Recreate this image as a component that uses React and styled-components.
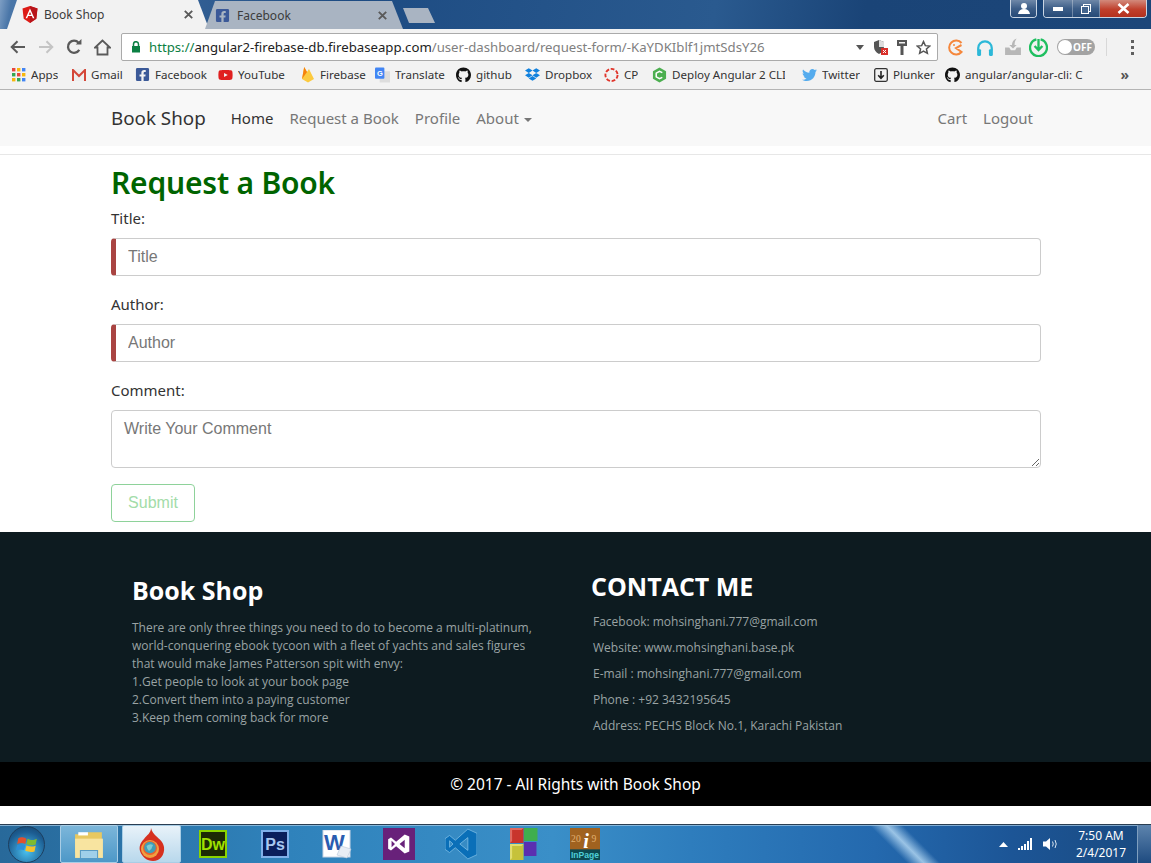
import React from "react"
import styled, { createGlobalStyle } from "styled-components"
import { FaGithub, FaTwitter, FaDropbox, FaFacebookSquare, FaYoutube } from "react-icons/fa"

const GlobalStyle = createGlobalStyle`
  html, body { margin: 0; padding: 0; background: #fff; }
  * { box-sizing: border-box; }
`

const Page = styled.div`
  width: 1151px;
  height: 863px;
  overflow: hidden;
  display: flex;
  flex-direction: column;
  font-family: "Noto Sans", sans-serif;
`

/* ---------- browser chrome ---------- */
const TitleBar = styled.div`
  height: 29px;
  flex: none;
  display: flex;
  align-items: flex-end;
  justify-content: space-between;
  padding-left: 7px;
  background: linear-gradient(100deg, #7d9ec4 0, #4a76a8 1%, #1d4b82 30%, #2a5a8f 62%, #1a4477 75%, #1c4679 100%);
`
const Tabs = styled.div`
  display: flex;
  align-items: flex-end;
`
const Tab = styled.div`
  width: ${p => p.$active ? "202px" : "198px"};
  height: ${p => p.$active ? "29px" : "28px"};
  margin-left: ${p => p.$active ? "0" : "-4px"};
  padding: 0 16px 0 ${p => p.$active ? "15px" : "10px"};
  display: flex;
  align-items: center;
  gap: 6px;
  font-size: 12px;
  color: #3c3c3c;
  background: ${p => p.$active ? "#f2f2f2" : "#a9b4c2"};
  clip-path: polygon(0 100%, 10px 0, calc(100% - 11px) 0, 100% 100%);
`
const TabIcon = styled.span`
  display: flex;
  width: 16px;
`
const TabLabel = styled.span`
  flex: 1;
`
const NewTab = styled.div`
  width: 32px;
  height: 15px;
  margin-bottom: 6px;
  background: #a9b4c2;
  clip-path: polygon(0 0, 25px 0, 100% 100%, 6px 100%);
`
const WindowButtons = styled.div`
  display: flex;
  align-self: flex-start;
  gap: 6px;
  margin-right: 4px;
`
const WinGroup = styled.div`
  height: 18px;
  display: flex;
  border: 1px solid #c9d5e3;
  border-top: none;
  border-radius: 0 0 4px 4px;
  overflow: hidden;
`
const WinBtn = styled.div`
  width: ${p => p.$w}px;
  display: flex;
  align-items: center;
  justify-content: center;
  background: ${p => p.$close
    ? "linear-gradient(#d28a7c, #c0402c 55%, #b4311e)"
    : "linear-gradient(#6f88a8, #3d5e88 50%, #264a77)"};
  border-right: 1px solid rgba(255,255,255,.3);
  &:last-child { border-right: none; }
`

const Toolbar = styled.div`
  height: 33px;
  flex: none;
  display: flex;
  align-items: center;
  background: #f2f2f2;
  padding: 3px 0 0 10px;
`
const NavIcons = styled.div`
  width: 111px;
  display: flex;
  align-items: center;
  gap: 12px;
`
const Omnibox = styled.div`
  width: 817px;
  height: 28px;
  display: flex;
  align-items: center;
  background: #fff;
  border: 1px solid #aaa;
  border-radius: 2px;
  padding: 0 6px 0 9px;
  font-size: 13.2px;
  white-space: nowrap;
`
const Https = styled.span`
  color: #0b8043;
  margin-left: 8px;
`
const Host = styled.span`
  color: #222;
`
const UrlPath = styled.span`
  color: #808080;
  flex: 1;
`
const OmniIcons = styled.div`
  display: flex;
  align-items: center;
  gap: 9px;
`
const Extensions = styled.div`
  display: flex;
  align-items: center;
  margin-left: 2px;
`
const ExtSlot = styled.div`
  width: ${p => p.$w}px;
  display: flex;
  justify-content: center;
`
const OffPill = styled.div`
  width: 38px;
  height: 16px;
  margin-left: 7px;
  border-radius: 8px;
  background: #a3a3a3;
  color: #fff;
  font-size: 10px;
  font-weight: 700;
  display: flex;
  align-items: center;
  justify-content: flex-end;
  padding-right: 3px;
  position: relative;
  &::before {
    content: "";
    position: absolute;
    left: 1px;
    top: 1px;
    width: 14px;
    height: 14px;
    border-radius: 50%;
    background: #fff;
  }
`
const Separator = styled.div`
  width: 1px;
  height: 18px;
  margin-left: 11px;
  background: #d8d8d8;
`
const Menu = styled.div`
  margin-left: 24px;
  display: flex;
  flex-direction: column;
  gap: 3px;
`
const MenuDot = styled.i`
  width: 3px;
  height: 3px;
  background: #5f5f5f;
  display: block;
`

const Bookmarks = styled.div`
  height: 28px;
  flex: none;
  display: flex;
  align-items: center;
  background: #f2f2f2;
  border-bottom: 1px solid #b4b4b4;
  padding: 0 22px 2px 11px;
  font-size: 11.6px;
  color: #333;
  white-space: nowrap;
`
const Mark = styled.div`
  display: flex;
  align-items: center;
  gap: 5px;
  width: ${p => p.$w}px;
  flex: none;
`
const MarkIcon = styled.span`
  width: 15px;
  flex: none;
  display: flex;
  justify-content: center;
`
const MarkLabel = styled.span`
  overflow: hidden;
  max-width: ${p => p.$max ? `${p.$max}px` : "none"};
`
const Chevron = styled.span`
  margin-left: auto;
  color: #555;
  font-size: 14px;
  font-weight: 700;
`

/* ---------- site ---------- */
const Navbar = styled.nav`
  height: 56px;
  flex: none;
  background: #f8f8f8;
  display: flex;
  align-items: center;
  padding: 0 118px 0 111px;
  font-size: 15px;
`
const Brand = styled.span`
  font-size: 18.8px;
  color: #333;
  margin-right: 25px;
`
const NavLink = styled.span`
  color: ${p => p.$active ? "#333" : "#777"};
  margin-right: 16px;
  &:last-child { margin-right: 0; }
`
const Caret = styled.i`
  display: inline-block;
  margin-left: 5px;
  vertical-align: middle;
  border-top: 4px solid #777;
  border-left: 4px solid transparent;
  border-right: 4px solid transparent;
`
const NavRight = styled.div`
  margin-left: auto;
  display: flex;
`
const Main = styled.main`
  flex: none;
  height: 378px;
  margin-top: 8px;
  border-top: 1px solid #e7e7e7;
  padding: 6px 110px 0 111px;
`
const Heading = styled.h1`
  margin: 0 0 3px;
  font-size: 30px;
  line-height: 44px;
  font-weight: 600;
  letter-spacing: -0.2px;
  color: #006400;
`
const Label = styled.label`
  display: block;
  font-size: 15px;
  line-height: 20px;
  color: #333;
  margin-bottom: 10px;
`
const Field = styled.div`
  margin-bottom: 18px;
`
const Input = styled.input`
  display: block;
  width: 100%;
  height: 38px;
  padding: 0 12px;
  font: 16px "Liberation Sans", sans-serif;
  color: #555;
  background: #fff;
  border: 1px solid #ccc;
  border-left: 5px solid #a94442;
  border-radius: 4px;
  &::placeholder { color: #777; opacity: 1; }
`
const TextArea = styled.textarea`
  display: block;
  width: 100%;
  height: 58px;
  padding: 9px 12px;
  font: 16px "Liberation Sans", sans-serif;
  border: 1px solid #ccc;
  border-radius: 4px;
  &::placeholder { color: #777; opacity: 1; }
`
const Submit = styled.button`
  display: block;
  width: 84px;
  height: 38px;
  margin-top: -2px;
  font: 16px "Liberation Sans", sans-serif;
  color: #a3dca9;
  background: #fff;
  border: 1px solid #8ed29a;
  border-radius: 4px;
`

const Footer = styled.footer`
  height: 230px;
  flex: none;
  background: #0d1b20;
  display: flex;
  font-family: "Open Sans", sans-serif;
`
const FooterLeft = styled.div`
  width: 459px;
  margin-left: 132px;
  padding-top: 41px;
`
const FooterTitle = styled.h2`
  margin: 0 0 12px;
  font-size: 25px;
  line-height: 34px;
  font-weight: 700;
  color: #fff;
`
const FooterText = styled.p`
  margin: 0;
  font-size: 12px;
  line-height: 18px;
  color: #9aa3a4;
`
const FooterRight = styled.div`
  padding-top: 37px;
`
const ContactTitle = styled.h2`
  margin: 0 0 6px;
  font-size: 25px;
  line-height: 34px;
  font-weight: 700;
  color: #fff;
`
const ContactLine = styled.p`
  margin: 0 0 0 2px;
  font-size: 12px;
  line-height: 26px;
  color: #9aa3a4;
`
const Copyright = styled.div`
  height: 44px;
  flex: none;
  background: #000;
  color: #fff;
  font-size: 15.5px;
  display: flex;
  align-items: center;
  justify-content: center;
`
const Spacer = styled.div`
  height: 18px;
  flex: none;
  background: #fff;
`

/* ---------- taskbar ---------- */
const Taskbar = styled.div`
  height: 39px;
  flex: none;
  display: flex;
  align-items: center;
  background:
    linear-gradient(45deg, transparent 76.3%, rgba(175, 212, 240, .85) 77.7%, transparent 79.1%),
    linear-gradient(90deg, #28699a 0, #2f82bb 25%, #3a8fc8 48%, #2e7dbd 60%, #2469ae 76%, #1c5596 88%, #1a4a80 100%);
  border-top: 1px solid #2a3e52;
  box-shadow: inset 0 1px 0 rgba(170, 205, 232, .7);
  padding-left: 8px;
`
const StartOrb = styled.div`
  width: 37px;
  height: 37px;
  margin-right: 15px;
  flex: none;
  border-radius: 50%;
  border: 1px solid #1d3f5f;
  background: radial-gradient(circle at 50% 70%, #49c0ee, #1c5d92 65%, #143f66);
  display: flex;
  align-items: center;
  justify-content: center;
`
const TaskSlot = styled.div`
  width: ${p => p.$w || 62}px;
  height: 38px;
  flex: none;
  display: flex;
  align-items: center;
  justify-content: center;
  margin-right: ${p => p.$gap || 0}px;
  border: ${p => p.$open ? "1px solid #a8cde5" : "none"};
  border-radius: 2px;
  background: ${p => p.$open === "active"
    ? "linear-gradient(#e8f2f9, #b8d8ec)"
    : p.$open ? "linear-gradient(#7cb6da, #4d98c8)" : "transparent"};
`
const Tray = styled.div`
  margin-left: auto;
  height: 100%;
  display: flex;
  align-items: center;
  color: #fff;
`
const TrayIcons = styled.div`
  display: flex;
  align-items: center;
  gap: 10px;
`
const Clock = styled.div`
  width: 66px;
  margin-left: 9px;
  text-align: center;
  font-size: 12px;
  line-height: 17px;
`
const ShowDesktop = styled.div`
  width: 14px;
  height: 100%;
  margin-left: 3px;
  border-left: 1px solid #7f9fbf;
  background: linear-gradient(#5d84ad, #1e4b80);
`

/* ---------- small drawings ---------- */
const AngularIcon = () => (
  <svg width="16" height="17" viewBox="0 0 16 17">
    <path d="M8 0 L15.5 2.6 L14.3 12.7 L8 17 L1.7 12.7 L.5 2.6Z" fill="#dd1b16" />
    <path d="M8 0 L15.5 2.6 L14.3 12.7 L8 17Z" fill="#b8141a" />
    <path d="M8 2.5 L3.6 12.3 H5.2 L6.1 10 H9.9 L10.8 12.3 H12.4Z M8 6 L9.3 8.8 H6.7Z" fill="#fff" fillRule="evenodd" />
  </svg>
)
const CloseX = () => (
  <svg width="9" height="9" viewBox="0 0 9 9">
    <path d="M.8 .8 L8.2 8.2 M8.2 .8 L.8 8.2" stroke="#5a5a5a" strokeWidth="1.9" />
  </svg>
)
const Back = ({ color = "#5a5a5a" }) => (
  <svg width="16" height="14" viewBox="0 0 16 14">
    <path d="M15 7 H2 M7.5 1.2 L1.7 7 L7.5 12.8" fill="none" stroke={color} strokeWidth="2" />
  </svg>
)
const Forward = () => (
  <svg width="16" height="14" viewBox="0 0 16 14">
    <path d="M1 7 H14 M8.5 1.2 L14.3 7 L8.5 12.8" fill="none" stroke="#c4c4c4" strokeWidth="2" />
  </svg>
)
const Reload = () => (
  <svg width="16" height="16" viewBox="0 0 14 14">
    <path d="M11.6 9.5 A5.3 5.3 0 1 1 11 3.2" fill="none" stroke="#5a5a5a" strokeWidth="2" />
    <path d="M8.5 4.8 H13.5 V0Z" fill="#5a5a5a" />
  </svg>
)
const Home = () => (
  <svg width="17" height="17" viewBox="0 0 17 17">
    <path d="M8.5 1.5 L1 8.5 H3.5 V15.5 H13.5 V8.5 H16Z" fill="none" stroke="#5a5a5a" strokeWidth="1.8" strokeLinejoin="miter" />
  </svg>
)
const Lock = () => (
  <svg width="10" height="12" viewBox="0 0 10 12">
    <path d="M2.5 5 V3.2 A2.5 2.5 0 0 1 7.5 3.2 V5" fill="none" stroke="#0b8043" strokeWidth="1.5" />
    <rect x="1" y="5" width="8" height="6.5" fill="#0b8043" />
  </svg>
)
const Triangle = () => (
  <svg width="8" height="5" viewBox="0 0 8 5"><path d="M0 0 H8 L4 5Z" fill="#555" /></svg>
)
const Shield = () => (
  <svg width="15" height="16" viewBox="0 0 15 16">
    <path d="M6 1 L11 3 V8 C11 11 9 13.5 6 15 C3 13.5 1 11 1 8 V3Z" fill="#555" />
    <path d="M6 1 L11 3 V8 H6Z" fill="#ddd" />
    <rect x="8" y="9" width="7" height="7" fill="#d9302a" />
    <path d="M10 11 L13 14 M13 11 L10 14" stroke="#fff" />
  </svg>
)
const KeyIcon = () => (
  <svg width="10" height="15" viewBox="0 0 10 15">
    <path d="M0 0 H10 V6 H6.5 V15 H3.5 V6 H0Z" fill="#555" />
    <rect x="2" y="2" width="6" height="1.5" fill="#f2f2f2" />
  </svg>
)
const Star = () => (
  <svg width="15" height="15" viewBox="0 0 24 24">
    <path d="M12 2.5 L14.9 9 L22 9.7 L16.7 14.4 L18.2 21.4 L12 17.8 L5.8 21.4 L7.3 14.4 L2 9.7 L9.1 9Z" fill="none" stroke="#555" strokeWidth="2.4" />
  </svg>
)
const CIcon = () => (
  <svg width="17" height="17" viewBox="0 0 17 17">
    <path d="M14.5 4 A7 7 0 1 0 14.5 13 L9 9 L14.5 6" fill="none" stroke="#f5873c" strokeWidth="2" />
    <circle cx="7" cy="6" r="1" fill="#f5873c" />
  </svg>
)
const Headphones = () => (
  <svg width="18" height="17" viewBox="0 0 16 15">
    <path d="M2 10 V8 A6 6 0 0 1 14 8 V10" fill="none" stroke="#2cb8d8" strokeWidth="2" />
    <rect x="1" y="9" width="3.5" height="6" rx="1" fill="#2cb8d8" />
    <rect x="11.5" y="9" width="3.5" height="6" rx="1" fill="#2cb8d8" />
  </svg>
)
const SaveGrey = () => (
  <svg width="18" height="18" viewBox="0 0 17 17">
    <path d="M1 9 H5 L6.5 11.5 H10.5 L12 9 H16 V16 H1Z" fill="#b7b7b7" />
    <path d="M8.5 10 L5 6.5 H7.5 C7.5 4 9 1.5 12 .5 C10.5 2.5 10 4 10 6.5 H12Z" fill="#b7b7b7" />
  </svg>
)
const GreenDown = () => (
  <svg width="19" height="19" viewBox="0 0 18 18">
    <path d="M7 1.4 A8 8 0 1 0 11 1.4" fill="none" stroke="#1fbf60" strokeWidth="2.2" />
    <path d="M9 1 V10 M5.3 7.5 L9 11.5 L12.7 7.5" fill="none" stroke="#1fbf60" strokeWidth="2.2" />
  </svg>
)
const AppsGrid = () => (
  <svg width="14" height="14" viewBox="0 0 14 14">
    {[["#e8453c", "#f6b70d", "#4285f4"], ["#34a853", "#e8453c", "#f6b70d"], ["#f6b70d", "#34a853", "#4285f4"]].map((row, y) =>
      row.map((c, x) => <rect key={`${x}-${y}`} x={x * 5} y={y * 5} width="3.4" height="3.4" fill={c} />)
    )}
  </svg>
)
const GmailIcon = () => (
  <svg width="14" height="12" viewBox="0 0 14 12">
    <rect width="14" height="12" fill="#eee" />
    <path d="M1 12 V1 L7 7 L13 1 V12" fill="none" stroke="#d44638" strokeWidth="2" />
  </svg>
)
const FirebaseIcon = () => (
  <svg width="14" height="17" viewBox="0 0 14 17">
    <path d="M1 13 L3.2 1 L6 6 L8 3 L13 13 L7 16.5Z" fill="#fcca3f" />
    <path d="M1 13 L3.2 1 L6 6Z" fill="#f6820c" />
  </svg>
)
const TranslateIcon = () => (
  <svg width="16" height="16" viewBox="0 0 16 16">
    <rect x="5" y="4" width="11" height="12" fill="#ddd" />
    <rect width="10" height="12" rx="1" fill="#4285f4" />
    <text x="2" y="9" fontSize="8" fontWeight="700" fill="#fff" fontFamily="Liberation Sans">G</text>
  </svg>
)
const CpIcon = () => (
  <svg width="16" height="16" viewBox="0 0 16 16">
    <circle cx="8" cy="8" r="6.5" fill="none" stroke="#e0352b" strokeWidth="2" strokeDasharray="4 1.8" />
  </svg>
)
const DeployIcon = () => (
  <svg width="16" height="16" viewBox="0 0 16 16">
    <path d="M8 0 L15 4 V12 L8 16 L1 12 V4Z" fill="#4caf50" />
    <path d="M11 5.5 L8 4 L4.5 6 V10 L8 12 L11 10.5" fill="none" stroke="#fff" strokeWidth="1.6" />
  </svg>
)
const PlunkerIcon = () => (
  <svg width="14" height="14" viewBox="0 0 14 14">
    <rect x=".7" y=".7" width="12.6" height="12.6" rx="1.5" fill="#f2f2f2" stroke="#333" strokeWidth="1.3" />
    <path d="M7 3 V10 M4.2 7.2 L7 10.4 L9.8 7.2" fill="none" stroke="#222" strokeWidth="1.6" />
  </svg>
)
const WinFlag = () => (
  <svg width="22" height="21" viewBox="-1 0 19 17">
    <path d="M1 3 C3 2 5 2 8 3.5 L7 8 C5 7 3 7 0 8Z" fill="#e0512f" />
    <path d="M9 3.5 C12 5 14 5 17 3.5 L16 8.5 C13 9.5 11 9.5 8 8.3Z" fill="#7fba2f" />
    <path d="M0 9 C3 8 5 8 7 9 L6 13.5 C4 12.5 2 12.5 -1 13.5Z" fill="#2c8fd8" />
    <path d="M8 9.3 C11 10.5 13 10.5 16 9.5 L15 14.5 C12 15.5 10 15 7 14Z" fill="#f6c12b" />
  </svg>
)
const FolderIcon = () => (
  <svg width="30" height="30" viewBox="0 0 28 28">
    <path d="M1 5 H11 L13 3 H26 V22 H1Z" fill="#e8c860" />
    <rect x="4" y="3" width="9" height="3" fill="#fff" />
    <path d="M1 9 H27 V27 H1Z" fill="#f8e4a0" />
    <path d="M6 27 V20 H22 V27" fill="#9fd0ea" stroke="#5a9cc4" />
  </svg>
)
const CometIcon = () => (
  <svg width="26" height="33" viewBox="0 0 26 33">
    <path d="M12 0 C12 5 8 7 5 11 C1 15 0 19 1 23 C3 29 8 33 14 33 C21 33 26 27 25 19 C24 13 20 11 17 8 C15 6 13 4 12 0Z" fill="#d6301f" />
    <circle cx="11" cy="21" r="9" fill="#f0a040" />
    <circle cx="11" cy="20" r="7" fill="#e9622e" />
    <circle cx="11" cy="19.5" r="5.8" fill="#3f9fb8" />
    <path d="M7.5 18 Q11 15 14 17 Q13 21 10 23 Q8 21 7.5 18Z" fill="#7fcbd2" />
  </svg>
)
const AppTile = ({ bg, border, color, size = 28, label, labelSize = 16 }) => (
  <svg width={size} height={size} viewBox={`0 0 ${size} ${size}`}>
    <rect x="1" y="1" width={size - 2} height={size - 2} fill={bg} stroke={border} strokeWidth="2" />
    <text x={size / 2} y={size / 2 + labelSize * 0.36} textAnchor="middle" fontSize={labelSize} fontWeight="700" fill={color} fontFamily="Liberation Sans">{label}</text>
  </svg>
)
const WordIcon = () => (
  <svg width="30" height="29" viewBox="0 0 30 29">
    <rect x="1" y="0" width="27" height="27" fill="#fff" stroke="#c9d5e5" />
    <text x="2" y="20" fontSize="22" fontWeight="700" fill="#2a5cb0" fontFamily="Liberation Sans">W</text>
    <path d="M19 16 L29 19 L25 28 L15 25Z" fill="#e8eef5" stroke="#b9c8da" strokeWidth=".6" />
  </svg>
)
const VsPurple = () => (
  <svg width="32" height="32" viewBox="0 0 28 30" preserveAspectRatio="none">
    <rect width="28" height="30" fill="#68217a" />
    <path d="M19 6 L23 8 V22 L19 24 L11.5 17 L7 21 L4.5 19.5 V10.5 L7 9 L11.5 13Z M7.5 12 V18 L10.5 15Z M19 11 L14.5 15 L19 19Z" fill="#fff" fillRule="evenodd" />
  </svg>
)
const VsCode = () => (
  <svg width="32" height="32" viewBox="0 0 28 30" preserveAspectRatio="none">
    <path d="M20 1 L28 5 V25 L20 29 L9 18.5 L4 23 L0 20 V10 L4 7 L9 11.5Z M4 12 V18 L7 15Z M20 9 L13 15 L20 21Z" fill="#0a6fb8" stroke="#7fbfe6" strokeWidth=".7" fillRule="evenodd" />
  </svg>
)
const Blocks = () => (
  <svg width="29" height="32" viewBox="0 0 28 32" preserveAspectRatio="none">
    <rect x="1" y="0" width="13" height="15" fill="#c8352c" />
    <rect x="14.5" y="0" width="13" height="13" fill="#3fae4e" />
    <rect x="1" y="16" width="13" height="16" fill="#c6c23a" />
    <rect x="14.5" y="14" width="12" height="14" fill="#5b2fb0" />
    <path d="M1 0 H14 L12 2 H3 V13 L1 15Z" fill="#e06a60" />
    <path d="M1 16 H14 L12 18 H3 V30 L1 32Z" fill="#e2de70" />
  </svg>
)
const InPage = () => (
  <svg width="30" height="32" viewBox="0 0 28 30" preserveAspectRatio="none">
    <rect width="28" height="30" fill="#a0621f" />
    <rect y="20" width="28" height="10" fill="#0c4a52" />
    <text x="1" y="13" fontSize="9" fill="#e0b070" fontFamily="Liberation Serif">20</text>
    <text x="20" y="13" fontSize="9" fill="#e0b070" fontFamily="Liberation Serif">9</text>
    <text x="15" y="19" textAnchor="middle" fontSize="19" fontStyle="italic" fontWeight="700" fill="#fff" fontFamily="Liberation Serif">i</text>
    <text x="14" y="28" textAnchor="middle" fontSize="8" fontWeight="700" fill="#4fd0d8" fontFamily="Liberation Sans">InPage</text>
  </svg>
)
const Bars = () => (
  <svg width="15" height="12" viewBox="0 0 15 12" fill="#fff">
    <rect x="0" y="10" width="2" height="2" /><rect x="3" y="8" width="2" height="4" />
    <rect x="6" y="6" width="2" height="6" /><rect x="9" y="3" width="2" height="9" />
    <rect x="12" y="0" width="2" height="12" />
  </svg>
)
const Speaker = () => (
  <svg width="16" height="14" viewBox="0 0 16 14">
    <path d="M0 4.5 H3 L7 1 V13 L3 9.5 H0Z" fill="#fff" />
    <path d="M9.5 4.5 Q11 7 9.5 9.5 M12 3 Q14.5 7 12 11" fill="none" stroke="#dbe7f2" />
  </svg>
)

const marks = [
  { w: 60, icon: <AppsGrid />, label: "Apps" },
  { w: 64, icon: <GmailIcon />, label: "Gmail" },
  { w: 83, icon: <FaFacebookSquare size={15} color="#3b5998" />, label: "Facebook" },
  { w: 82, icon: <FaYoutube size={16} color="#e02020" />, label: "YouTube" },
  { w: 75, icon: <FirebaseIcon />, label: "Firebase" },
  { w: 81, icon: <TranslateIcon />, label: "Translate" },
  { w: 69, icon: <FaGithub size={16} color="#111" />, label: "github" },
  { w: 79, icon: <FaDropbox size={15} color="#1081de" />, label: "Dropbox" },
  { w: 48, icon: <CpIcon />, label: "CP" },
  { w: 150, icon: <DeployIcon />, label: "Deploy Angular 2 CLI", max: 113 },
  { w: 71, icon: <FaTwitter size={16} color="#55acee" />, label: "Twitter" },
  { w: 72, icon: <PlunkerIcon />, label: "Plunker" },
  { w: 150, icon: <FaGithub size={16} color="#111" />, label: "angular/angular-cli: C" },
]

const contacts = [
  "Facebook: mohsinghani.777@gmail.com",
  "Website: www.mohsinghani.base.pk",
  "E-mail : mohsinghani.777@gmail.com",
  "Phone : +92 3432195645",
  "Address: PECHS Block No.1, Karachi Pakistan",
]

export default function App() {
  return (
    <Page>
      <GlobalStyle />
      <TitleBar>
        <Tabs>
          <Tab $active>
            <TabIcon><AngularIcon /></TabIcon>
            <TabLabel>Book Shop</TabLabel>
            <CloseX />
          </Tab>
          <Tab>
            <TabIcon><FaFacebookSquare size={15} color="#3b5998" /></TabIcon>
            <TabLabel>Facebook</TabLabel>
            <CloseX />
          </Tab>
          <NewTab />
        </Tabs>
        <WindowButtons>
          <WinGroup>
            <WinBtn $w={25}>
              <svg width="12" height="11" viewBox="0 0 12 11"><circle cx="6" cy="3" r="3" fill="#fff" /><path d="M0 11 Q1 6 6 6 Q11 6 12 11Z" fill="#fff" /></svg>
            </WinBtn>
          </WinGroup>
          <WinGroup>
            <WinBtn $w={29}><svg width="10" height="4"><rect width="10" height="4" fill="#fff" /></svg></WinBtn>
            <WinBtn $w={27}><svg width="10" height="10"><rect x="2.5" y=".5" width="7" height="7" fill="none" stroke="#fff" /><rect x=".5" y="2.5" width="7" height="7" fill="#44658e" stroke="#fff" /></svg></WinBtn>
            <WinBtn $w={46} $close><svg width="13" height="11" viewBox="0 0 13 11"><path d="M1.5 1 L11.5 10 M11.5 1 L1.5 10" stroke="#fff" strokeWidth="2.6" /></svg></WinBtn>
          </WinGroup>
        </WindowButtons>
      </TitleBar>

      <Toolbar>
        <NavIcons>
          <Back />
          <Forward />
          <Reload />
          <Home />
        </NavIcons>
        <Omnibox>
          <Lock />
          <Https>https://</Https>
          <Host>angular2-firebase-db.firebaseapp.com</Host>
          <UrlPath>/user-dashboard/request-form/-KaYDKIblf1jmtSdsY26</UrlPath>
          <OmniIcons>
            <Triangle />
            <Shield />
            <KeyIcon />
            <Star />
          </OmniIcons>
        </Omnibox>
        <Extensions>
          <ExtSlot $w={30}><CIcon /></ExtSlot>
          <ExtSlot $w={30}><Headphones /></ExtSlot>
          <ExtSlot $w={26}><SaveGrey /></ExtSlot>
          <ExtSlot $w={24}><GreenDown /></ExtSlot>
          <OffPill>OFF</OffPill>
        </Extensions>
        <Separator />
        <Menu>
          <MenuDot />
          <MenuDot />
          <MenuDot />
        </Menu>
      </Toolbar>

      <Bookmarks>
        {marks.map(m => (
          <Mark key={m.label} $w={m.w}>
            <MarkIcon>{m.icon}</MarkIcon>
            <MarkLabel $max={m.max}>{m.label}</MarkLabel>
          </Mark>
        ))}
        <Chevron>»</Chevron>
      </Bookmarks>

      <Navbar>
        <Brand>Book Shop</Brand>
        <NavLink $active>Home</NavLink>
        <NavLink>Request a Book</NavLink>
        <NavLink>Profile</NavLink>
        <NavLink>About<Caret /></NavLink>
        <NavRight>
          <NavLink>Cart</NavLink>
          <NavLink>Logout</NavLink>
        </NavRight>
      </Navbar>

      <Main>
        <Heading>Request a Book</Heading>
        <Field>
          <Label>Title:</Label>
          <Input placeholder="Title" />
        </Field>
        <Field>
          <Label>Author:</Label>
          <Input placeholder="Author" />
        </Field>
        <Field>
          <Label>Comment:</Label>
          <TextArea placeholder="Write Your Comment" />
        </Field>
        <Submit>Submit</Submit>
      </Main>

      <Footer>
        <FooterLeft>
          <FooterTitle>Book Shop</FooterTitle>
          <FooterText>
            There are only three things you need to do to become a multi-platinum,<br />
            world-conquering ebook tycoon with a fleet of yachts and sales figures<br />
            that would make James Patterson spit with envy:<br />
            1.Get people to look at your book page<br />
            2.Convert them into a paying customer<br />
            3.Keep them coming back for more
          </FooterText>
        </FooterLeft>
        <FooterRight>
          <ContactTitle>CONTACT ME</ContactTitle>
          {contacts.map(c => <ContactLine key={c}>{c}</ContactLine>)}
        </FooterRight>
      </Footer>
      <Copyright>© 2017 - All Rights with Book Shop</Copyright>
      <Spacer />

      <Taskbar>
        <StartOrb><WinFlag /></StartOrb>
        <TaskSlot $w={58} $gap={4} $open="yes"><FolderIcon /></TaskSlot>
        <TaskSlot $w={59} $gap={1} $open="active"><CometIcon /></TaskSlot>
        <TaskSlot><AppTile bg="#1c2a05" border="#8ad400" color="#9fe000" label="Dw" /></TaskSlot>
        <TaskSlot><AppTile bg="#0a1f5c" border="#7fb0ea" color="#a8c8f0" label="Ps" /></TaskSlot>
        <TaskSlot><WordIcon /></TaskSlot>
        <TaskSlot><VsPurple /></TaskSlot>
        <TaskSlot><VsCode /></TaskSlot>
        <TaskSlot><Blocks /></TaskSlot>
        <TaskSlot><InPage /></TaskSlot>
        <Tray>
          <TrayIcons>
            <svg width="9" height="5" viewBox="0 0 9 5"><path d="M0 5 L4.5 0 L9 5Z" fill="#fff" /></svg>
            <Bars />
            <Speaker />
          </TrayIcons>
          <Clock>7:50 AM<br />2/4/2017</Clock>
          <ShowDesktop />
        </Tray>
      </Taskbar>
    </Page>
  )
}
